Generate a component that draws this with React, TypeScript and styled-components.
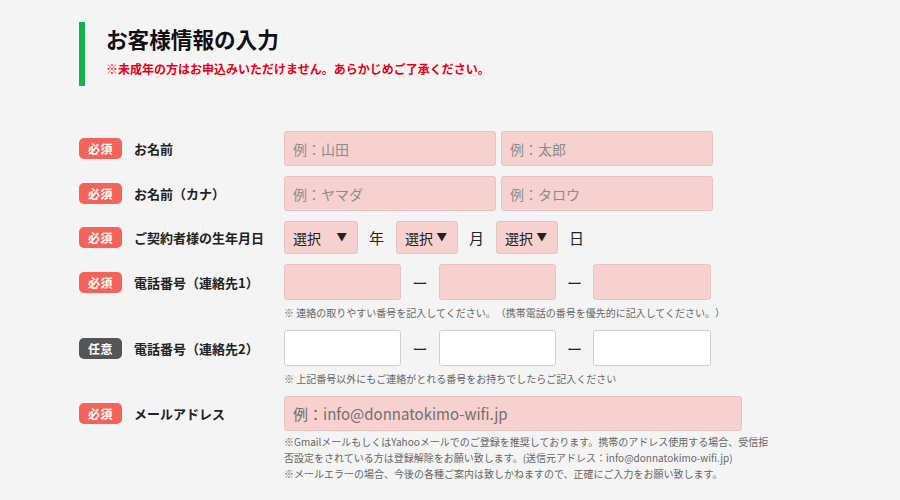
import React from "react";
import styled, { createGlobalStyle } from "styled-components";

const Global = createGlobalStyle`
  html, body { margin: 0; padding: 0; background: #f4f4f4; }
  body {
    font-family: "Noto Sans CJK JP", "Noto Sans", sans-serif;
    color: #222;
    text-spacing-trim: space-all;
  }
  * { box-sizing: border-box; }
`;

const Page = styled.div`
  width: 900px;
  height: 500px;
  padding: 22px 0 0 79px;
  overflow: hidden;
`;

const Header = styled.header`
  border-left: 6px solid #10b44b;
  padding: 3px 0 9px 21px;
`;

const Title = styled.h1`
  margin: 0;
  font-size: 21.6px;
  line-height: 28px;
  font-weight: 700;
  color: #111;
`;

const Caution = styled.p`
  margin: 8px 0 0;
  font-size: 12px;
  line-height: 16px;
  font-weight: 700;
  color: #e60012;
`;

const Form = styled.div`
  margin-top: 45px;
  display: flex;
  flex-direction: column;
  gap: 10px;
`;

const Row = styled.div`
  display: grid;
  grid-template-columns: 205px 1fr;
  align-items: start;
`;

const LabelCell = styled.div<{ $h: number }>`
  height: ${(p) => p.$h}px;
  display: flex;
  align-items: center;
`;

const Badge = styled.span<{ $optional?: boolean }>`
  width: 43px;
  height: 21px;
  border-radius: 5px;
  background: ${(p) => (p.$optional ? "#555555" : "#f3635a")};
  color: #fff;
  font-size: 12px;
  font-weight: 700;
  display: flex;
  align-items: center;
  justify-content: center;
  margin-right: 12px;
  letter-spacing: 0.5px;
`;

const LabelText = styled.span`
  font-size: 13px;
  font-weight: 700;
  color: #222;
`;

const FieldCell = styled.div`
  display: flex;
  flex-direction: column;
`;

const FieldLine = styled.div<{ $gap?: number }>`
  display: flex;
  align-items: center;
  gap: ${(p) => p.$gap ?? 0}px;
`;

const Input = styled.input<{ $w: number; $h?: number; $white?: boolean; $fs?: number }>`
  width: ${(p) => p.$w}px;
  height: ${(p) => p.$h ?? 35}px;
  padding: 0 8px;
  border-radius: 3px;
  border: 1px solid ${(p) => (p.$white ? "#cfcfcf" : "#e6c2c2")};
  background: ${(p) => (p.$white ? "#ffffff" : "#f7d0d0")};
  font-family: inherit;
  font-size: ${(p) => p.$fs ?? 14}px;
  color: #222;
  outline: none;
  text-spacing-trim: space-all;
  &::placeholder {
    color: ${(p) => (p.$fs && p.$fs > 14 ? "#707070" : "#8c8c8c")};
  }
`;

const Select = styled.div<{ $w: number }>`
  width: ${(p) => p.$w}px;
  height: 33px;
  padding: 0 10px 0 8px;
  border-radius: 3px;
  border: 1px solid #e6c2c2;
  background: #f7d0d0;
  display: flex;
  align-items: center;
  justify-content: space-between;
  gap: 2px;
  font-size: 14px;
  color: #222;
`;

const Arrow = styled.span`
  font-size: 10.5px;
  line-height: 1;
`;

const Unit = styled.span`
  font-size: 15px;
  margin: 0 12px 0 11px;
  color: #222;
`;

const Dash = styled.span<{ $w: number }>`
  width: ${(p) => p.$w}px;
  text-align: center;
  font-size: 15px;
  color: #222;
`;

const Note = styled.p<{ $lh?: number; $mt?: number; $w?: number }>`
  margin: ${(p) => p.$mt ?? 5}px 0 0;
  font-size: 10px;
  line-height: ${(p) => p.$lh ?? 15}px;
  color: #666;
  ${(p) => (p.$w ? `width: ${p.$w}px;` : "")}
`;

type LabelProps = { text: string; optional?: boolean; h?: number };
const Label = ({ text, optional, h = 35 }: LabelProps) => (
  <LabelCell $h={h}>
    <Badge $optional={optional}>{optional ? "任意" : "必須"}</Badge>
    <LabelText>{text}</LabelText>
  </LabelCell>
);

const PhoneFields = ({ white }: { white?: boolean }) => (
  <FieldLine>
    <Input $w={117} $h={36} $white={white} />
    <Dash $w={38}>ー</Dash>
    <Input $w={117} $h={36} $white={white} />
    <Dash $w={37}>ー</Dash>
    <Input $w={118} $h={36} $white={white} />
  </FieldLine>
);

export default function App() {
  return (
    <Page>
      <Global />
      <Header>
        <Title>お客様情報の入力</Title>
        <Caution>※未成年の方はお申込みいただけません。あらかじめご了承ください。</Caution>
      </Header>
      <Form>
        <Row>
          <Label text="お名前" />
          <FieldLine $gap={5}>
            <Input $w={212} placeholder="例：山田" />
            <Input $w={212} placeholder="例：太郎" />
          </FieldLine>
        </Row>
        <Row>
          <Label text="お名前（カナ）" />
          <FieldLine $gap={5}>
            <Input $w={212} placeholder="例：ヤマダ" />
            <Input $w={212} placeholder="例：タロウ" />
          </FieldLine>
        </Row>
        <Row>
          <Label text="ご契約者様の生年月日" h={33} />
          <FieldLine>
            <Select $w={74}>
              <span>選択</span>
              <Arrow>▼</Arrow>
            </Select>
            <Unit>年</Unit>
            <Select $w={62}>
              <span>選択</span>
              <Arrow>▼</Arrow>
            </Select>
            <Unit>月</Unit>
            <Select $w={62}>
              <span>選択</span>
              <Arrow>▼</Arrow>
            </Select>
            <Unit>日</Unit>
          </FieldLine>
        </Row>
        <Row>
          <Label text="電話番号（連絡先1）" h={36} />
          <FieldCell>
            <PhoneFields />
            <Note>※ 連絡の取りやすい番号を記入してください。（携帯電話の番号を優先的に記入してください。）</Note>
          </FieldCell>
        </Row>
        <Row>
          <Label text="電話番号（連絡先2）" optional h={36} />
          <FieldCell>
            <PhoneFields white />
            <Note>※ 上記番号以外にもご連絡がとれる番号をお持ちでしたらご記入ください</Note>
          </FieldCell>
        </Row>
        <Row>
          <Label text="メールアドレス" />
          <FieldCell>
            <Input $w={458} $fs={15} placeholder="例：info@donnatokimo-wifi.jp" />
            <Note $lh={16} $mt={3} $w={490}>
              ※GmailメールもしくはYahooメールでのご登録を推奨しております。携帯のアドレス使用する場合、受信拒否設定をされている方は登録解除をお願い致します。(送信元アドレス：info@donnatokimo-wifi.jp)
              <br />
              ※メールエラーの場合、今後の各種ご案内は致しかねますので、正確にご入力をお願い致します。
            </Note>
          </FieldCell>
        </Row>
      </Form>
    </Page>
  );
}
